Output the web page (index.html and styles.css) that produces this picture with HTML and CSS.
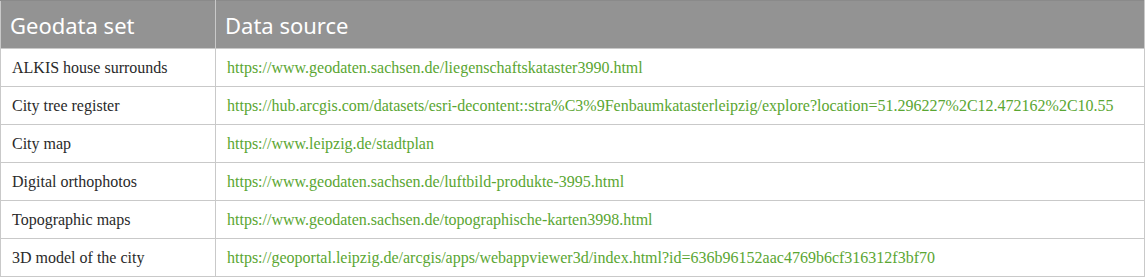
FILE: index.html
```html
<!DOCTYPE html>
<html>
<head>
<meta charset="utf-8">
<link rel="stylesheet" href="styles.css">
</head>
<body>
<table class="data">
  <thead>
    <tr><th class="c1">Geodata set</th><th>Data source</th></tr>
  </thead>
  <tbody>
    <tr><td class="c1">ALKIS house surrounds</td><td><a href="#">https://www.geodaten.sachsen.de/liegenschaftskataster3990.html</a></td></tr>
    <tr><td class="c1">City tree register</td><td><a href="#">https://hub.arcgis.com/datasets/esri-decontent::stra%C3%9Fenbaumkatasterleipzig/explore?location=51.296227%2C12.472162%2C10.55</a></td></tr>
    <tr><td class="c1">City map</td><td><a href="#">https://www.leipzig.de/stadtplan</a></td></tr>
    <tr><td class="c1">Digital orthophotos</td><td><a href="#">https://www.geodaten.sachsen.de/luftbild-produkte-3995.html</a></td></tr>
    <tr><td class="c1">Topographic maps</td><td><a href="#">https://www.geodaten.sachsen.de/topographische-karten3998.html</a></td></tr>
    <tr><td class="c1">3D model of the city</td><td><a href="#">https://geoportal.leipzig.de/arcgis/apps/webappviewer3d/index.html?id=636b96152aac4769b6cf316312f3bf70</a></td></tr>
  </tbody>
</table>
</body>
</html>
```
FILE: styles.css
```css
html, body { margin: 0; padding: 0; background: #fff; }
.data {
  width: 1145px;
  border-collapse: collapse;
  table-layout: fixed;
}
.data .c1 { width: 215px; }
.data th {
  background: #939393;
  color: #fff;
  font-family: "Noto Sans", "Open Sans", sans-serif;
  font-weight: 400;
  font-size: 22px;
  text-align: left;
  height: 48px;
  padding: 0 0 0 9px;
  border: 1px solid #c9c9c9;
  border-top-color: #8a8a8a;
  box-sizing: border-box;
}
.data td {
  font-family: "Liberation Serif", "Times New Roman", serif;
  font-size: 16px;
  color: #2a2a2a;
  height: 38px;
  padding: 0 0 0 11px;
  border: 1px solid #c9c9c9;
  box-sizing: border-box;
  white-space: nowrap;
}
.data a { color: #5aa632; text-decoration: none; }
```
